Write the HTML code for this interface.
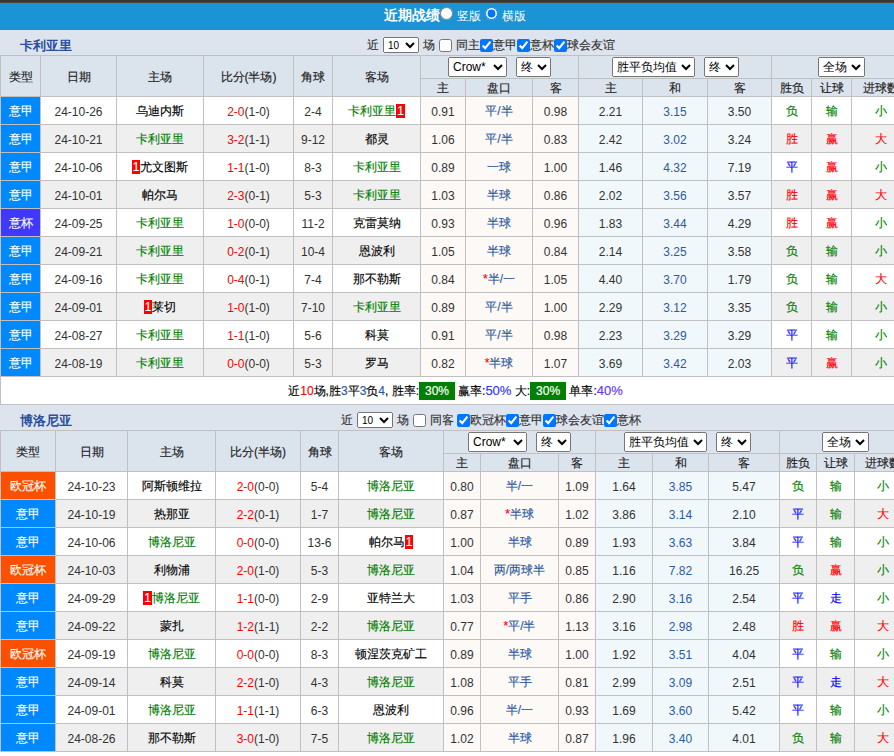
<!DOCTYPE html>
<html><head><meta charset="utf-8"><style>
html,body{margin:0;padding:0;background:#fff;}
body{width:910px;font-family:"Liberation Sans",sans-serif;font-size:12px;color:#333;overflow:hidden;}
.top{height:2px;background:#373737;border-bottom:1px solid #4e4441;}
.bar{height:27px;background:#1a94d4;color:#fff;text-align:center;font-size:12px;line-height:27px;}
.bar b{font-size:14px;}
.bar .rd{margin:0 2px 0 0;width:12px;height:12px;vertical-align:-2px;}
.sec{position:relative;background:#dde4ed;}
.tt{position:absolute;left:20px;top:7px;font-size:13px;font-weight:bold;color:#2b4f9e;}
.flt{position:absolute;top:6px;font-size:12px;color:#333;white-space:nowrap;}
.flt input{margin:0;width:13px;height:13px;vertical-align:-2px;}
.flt .cb0{margin:0 3px 0 4px;}
.ns{width:36px;height:15px;font-size:12px;padding:0;}
table.t{border-collapse:collapse;table-layout:fixed;width:910px;}
.t td,.t th{border:1px solid #c0c0c0;padding:0;text-align:center;white-space:nowrap;overflow:hidden;font-weight:normal;}
.t th{background:#dbe3ec;color:#222;}
.t tr.h1 th{height:22px;}
.t tr.h2 th{height:16px;padding-top:1px;line-height:16px;}
.t td{height:25px;padding-top:2px;background:#fff;color:#000;}
.t tr.alt td{background:#efefef;}
.t td.ty{color:#fff;}
.t td.o1{background:#fdf9f6 !important;}
.t td.o2{background:#f0f8fb !important;}
.dk{color:#333 !important;}
.bl{color:#2c5aa0 !important;}
.g{color:#008000;}
.r{color:#f00;}
.bd{font-style:normal;background:#f00;color:#fff;padding:0 1px;}
.t select{height:20px;font-size:12px;vertical-align:middle;}
.sum td{height:25px;background:#fff;}
.gb{background:#008000;color:#fff;padding:2px 6px 2px 6px;}
.bb{color:#33f;font-size:13px;}
.pb{color:#63f;font-size:13px;}
.b2{color:#2c5aa0;}
.ab{position:absolute;white-space:nowrap;}
.bar{position:relative;}
.bar .ab{line-height:normal;}
.bar .rd{margin:0;width:13px;height:13px;}
.sec input{margin:0;width:13px;height:13px;}
.sec .ab{font-size:12px;color:#333;}
.sec select.ns{width:36px;height:16px;font-size:10px;color:#000;}
.t th[rowspan]{padding-top:3px;}
.t td,.t th,.sec .ab,.sum td{-webkit-text-stroke:0.15px currentColor;}
.t td.dk,.t td.nm{-webkit-text-stroke:0;}
select{-webkit-text-stroke:0 !important;}
select,input{font-family:"Liberation Sans",sans-serif;}

</style></head><body>
<div class="top"></div>
<div class="bar"><b class="ab" style="left:384px;top:4px">近期战绩</b><input type="radio" class="rd ab" style="left:440px;top:4px"><span class="ab" style="left:457px;top:5px">竖版</span><input type="radio" class="rd ab" style="left:485px;top:4px" checked><span class="ab" style="left:502px;top:5px">横版</span></div>
<div class="sec" style="height:25px"><span class="tt">卡利亚里</span><span class="ab" style="left:367px;top:7px">近</span><select class="ns ab" style="left:383px;top:7px"><option>10</option></select><span class="ab" style="left:423px;top:7px">场</span><input type="checkbox" class="ab" style="left:439px;top:9px"><span class="ab" style="left:456px;top:7px">同主</span><input type="checkbox" class="ab" style="left:480px;top:9px" checked><span class="ab" style="left:493px;top:7px">意甲</span><input type="checkbox" class="ab" style="left:517px;top:9px" checked><span class="ab" style="left:530px;top:7px">意杯</span><input type="checkbox" class="ab" style="left:554px;top:9px" checked><span class="ab" style="left:567px;top:7px">球会友谊</span></div>
<table class="t t1"><colgroup><col style="width:40px"><col style="width:76px"><col style="width:87px"><col style="width:90px"><col style="width:39px"><col style="width:88px"><col style="width:45px"><col style="width:67px"><col style="width:46px"><col style="width:64px"><col style="width:65px"><col style="width:64px"><col style="width:40px"><col style="width:40px"><col style="width:59px"></colgroup>
<tr class="h1"><th rowspan="2">类型</th><th rowspan="2">日期</th><th rowspan="2">主场</th><th rowspan="2">比分(半场)</th><th rowspan="2">角球</th><th rowspan="2">客场</th><th colspan="3"><select style="width:59px;margin:0 9px 0 0"><option>Crow*</option></select><select style="width:35px;margin:0 0px 0 0"><option>终</option></select></th><th colspan="3"><select style="width:83px;margin:0 9px 0 0"><option>胜平负均值</option></select><select style="width:35px;margin:0 0px 0 0"><option>终</option></select></th><th colspan="3"><select style="width:47px;margin:0 0px 0 0"><option>全场</option></select></th></tr><tr class="h2"><th>主</th><th>盘口</th><th>客</th><th>主</th><th>和</th><th>客</th><th>胜负</th><th>让球</th><th>进球数</th></tr>
<tr class=""><td class="ty" style="background:#0088ff">意甲</td><td class="dk">24-10-26</td><td>乌迪内斯</td><td class="dk"><span class="r">2-0</span>(1-0)</td><td class="dk">2-4</td><td><span class="g">卡利亚里</span><i class="bd">1</i></td><td class="o1 dk">0.91</td><td class="o1 bl">平/半</td><td class="o1 dk">0.98</td><td class="o2 dk">2.21</td><td class="o2 bl nm">3.15</td><td class="o2 dk">3.50</td><td style="color:#008000">负</td><td style="color:#008000">输</td><td style="color:#008000">小</td></tr>
<tr class="alt"><td class="ty" style="background:#0088ff">意甲</td><td class="dk">24-10-21</td><td><span class="g">卡利亚里</span></td><td class="dk"><span class="r">3-2</span>(1-1)</td><td class="dk">9-12</td><td>都灵</td><td class="o1 dk">1.06</td><td class="o1 bl">平/半</td><td class="o1 dk">0.83</td><td class="o2 dk">2.42</td><td class="o2 bl nm">3.02</td><td class="o2 dk">3.24</td><td style="color:#f00">胜</td><td style="color:#f00">赢</td><td style="color:#f00">大</td></tr>
<tr class=""><td class="ty" style="background:#0088ff">意甲</td><td class="dk">24-10-06</td><td><i class="bd">1</i>尤文图斯</td><td class="dk"><span class="r">1-1</span>(1-0)</td><td class="dk">8-3</td><td><span class="g">卡利亚里</span></td><td class="o1 dk">0.89</td><td class="o1 bl">一球</td><td class="o1 dk">1.00</td><td class="o2 dk">1.46</td><td class="o2 bl nm">4.32</td><td class="o2 dk">7.19</td><td style="color:#00f">平</td><td style="color:#f00">赢</td><td style="color:#008000">小</td></tr>
<tr class="alt"><td class="ty" style="background:#0088ff">意甲</td><td class="dk">24-10-01</td><td>帕尔马</td><td class="dk"><span class="r">2-3</span>(0-1)</td><td class="dk">5-3</td><td><span class="g">卡利亚里</span></td><td class="o1 dk">1.03</td><td class="o1 bl">半球</td><td class="o1 dk">0.86</td><td class="o2 dk">2.02</td><td class="o2 bl nm">3.56</td><td class="o2 dk">3.57</td><td style="color:#f00">胜</td><td style="color:#f00">赢</td><td style="color:#f00">大</td></tr>
<tr class=""><td class="ty" style="background:#4038ff">意杯</td><td class="dk">24-09-25</td><td><span class="g">卡利亚里</span></td><td class="dk"><span class="r">1-0</span>(0-0)</td><td class="dk">11-2</td><td>克雷莫纳</td><td class="o1 dk">0.93</td><td class="o1 bl">半球</td><td class="o1 dk">0.96</td><td class="o2 dk">1.83</td><td class="o2 bl nm">3.44</td><td class="o2 dk">4.29</td><td style="color:#f00">胜</td><td style="color:#f00">赢</td><td style="color:#008000">小</td></tr>
<tr class="alt"><td class="ty" style="background:#0088ff">意甲</td><td class="dk">24-09-21</td><td><span class="g">卡利亚里</span></td><td class="dk"><span class="r">0-2</span>(0-1)</td><td class="dk">10-4</td><td>恩波利</td><td class="o1 dk">1.05</td><td class="o1 bl">半球</td><td class="o1 dk">0.84</td><td class="o2 dk">2.14</td><td class="o2 bl nm">3.25</td><td class="o2 dk">3.58</td><td style="color:#008000">负</td><td style="color:#008000">输</td><td style="color:#008000">小</td></tr>
<tr class=""><td class="ty" style="background:#0088ff">意甲</td><td class="dk">24-09-16</td><td><span class="g">卡利亚里</span></td><td class="dk"><span class="r">0-4</span>(0-1)</td><td class="dk">7-4</td><td>那不勒斯</td><td class="o1 dk">0.84</td><td class="o1 bl"><span class="r">*</span>半/一</td><td class="o1 dk">1.05</td><td class="o2 dk">4.40</td><td class="o2 bl nm">3.70</td><td class="o2 dk">1.79</td><td style="color:#008000">负</td><td style="color:#008000">输</td><td style="color:#f00">大</td></tr>
<tr class="alt"><td class="ty" style="background:#0088ff">意甲</td><td class="dk">24-09-01</td><td><i class="bd">1</i>莱切</td><td class="dk"><span class="r">1-0</span>(1-0)</td><td class="dk">7-10</td><td><span class="g">卡利亚里</span></td><td class="o1 dk">0.89</td><td class="o1 bl">平/半</td><td class="o1 dk">1.00</td><td class="o2 dk">2.29</td><td class="o2 bl nm">3.12</td><td class="o2 dk">3.35</td><td style="color:#008000">负</td><td style="color:#008000">输</td><td style="color:#008000">小</td></tr>
<tr class=""><td class="ty" style="background:#0088ff">意甲</td><td class="dk">24-08-27</td><td><span class="g">卡利亚里</span></td><td class="dk"><span class="r">1-1</span>(1-0)</td><td class="dk">5-6</td><td>科莫</td><td class="o1 dk">0.91</td><td class="o1 bl">平/半</td><td class="o1 dk">0.98</td><td class="o2 dk">2.23</td><td class="o2 bl nm">3.29</td><td class="o2 dk">3.29</td><td style="color:#00f">平</td><td style="color:#008000">输</td><td style="color:#008000">小</td></tr>
<tr class="alt"><td class="ty" style="background:#0088ff">意甲</td><td class="dk">24-08-19</td><td><span class="g">卡利亚里</span></td><td class="dk"><span class="r">0-0</span>(0-0)</td><td class="dk">5-3</td><td>罗马</td><td class="o1 dk">0.82</td><td class="o1 bl"><span class="r">*</span>半球</td><td class="o1 dk">1.07</td><td class="o2 dk">3.69</td><td class="o2 bl nm">3.42</td><td class="o2 dk">2.03</td><td style="color:#00f">平</td><td style="color:#f00">赢</td><td style="color:#008000">小</td></tr>
<tr class="sum"><td colspan="15">近<span class="r">10</span>场,胜<span class="b2">3</span>平<span class="b2">3</span>负<span class="b2">4</span>, 胜率:<span class="gb">30%</span><span style="margin-left:3px">赢</span>率:<span class="bb">50%</span> 大:<span class="gb">30%</span> 单率:<span class="pb">40%</span></td></tr>
</table>
<div class="sec" style="height:25px"><span class="tt">博洛尼亚</span><span class="ab" style="left:341px;top:7px">近</span><select class="ns ab" style="left:357px;top:7px"><option>10</option></select><span class="ab" style="left:397px;top:7px">场</span><input type="checkbox" class="ab" style="left:413px;top:9px"><span class="ab" style="left:430px;top:7px">同客</span><input type="checkbox" class="ab" style="left:457px;top:9px" checked><span class="ab" style="left:470px;top:7px">欧冠杯</span><input type="checkbox" class="ab" style="left:506px;top:9px" checked><span class="ab" style="left:519px;top:7px">意甲</span><input type="checkbox" class="ab" style="left:543px;top:9px" checked><span class="ab" style="left:556px;top:7px">球会友谊</span><input type="checkbox" class="ab" style="left:604px;top:9px" checked><span class="ab" style="left:617px;top:7px">意杯</span></div>
<table class="t t2"><colgroup><col style="width:55px"><col style="width:72px"><col style="width:88px"><col style="width:85px"><col style="width:38px"><col style="width:105px"><col style="width:37px"><col style="width:78px"><col style="width:37px"><col style="width:57px"><col style="width:56px"><col style="width:71px"><col style="width:37px"><col style="width:38px"><col style="width:56px"></colgroup>
<tr class="h1"><th rowspan="2">类型</th><th rowspan="2">日期</th><th rowspan="2">主场</th><th rowspan="2">比分(半场)</th><th rowspan="2">角球</th><th rowspan="2">客场</th><th colspan="3"><select style="width:59px;margin:0 9px 0 0"><option>Crow*</option></select><select style="width:35px;margin:0 0px 0 0"><option>终</option></select></th><th colspan="3"><select style="width:83px;margin:0 9px 0 0"><option>胜平负均值</option></select><select style="width:35px;margin:0 0px 0 0"><option>终</option></select></th><th colspan="3"><select style="width:47px;margin:0 0px 0 0"><option>全场</option></select></th></tr><tr class="h2"><th>主</th><th>盘口</th><th>客</th><th>主</th><th>和</th><th>客</th><th>胜负</th><th>让球</th><th>进球数</th></tr>
<tr class=""><td class="ty" style="background:#fa5000">欧冠杯</td><td class="dk">24-10-23</td><td>阿斯顿维拉</td><td class="dk"><span class="r">2-0</span>(0-0)</td><td class="dk">5-4</td><td><span class="g">博洛尼亚</span></td><td class="o1 dk">0.80</td><td class="o1 bl">半/一</td><td class="o1 dk">1.09</td><td class="o2 dk">1.64</td><td class="o2 bl nm">3.85</td><td class="o2 dk">5.47</td><td style="color:#008000">负</td><td style="color:#008000">输</td><td style="color:#008000">小</td></tr>
<tr class="alt"><td class="ty" style="background:#0088ff">意甲</td><td class="dk">24-10-19</td><td>热那亚</td><td class="dk"><span class="r">2-2</span>(0-1)</td><td class="dk">1-7</td><td><span class="g">博洛尼亚</span></td><td class="o1 dk">0.87</td><td class="o1 bl"><span class="r">*</span>半球</td><td class="o1 dk">1.02</td><td class="o2 dk">3.86</td><td class="o2 bl nm">3.14</td><td class="o2 dk">2.10</td><td style="color:#00f">平</td><td style="color:#008000">输</td><td style="color:#f00">大</td></tr>
<tr class=""><td class="ty" style="background:#0088ff">意甲</td><td class="dk">24-10-06</td><td><span class="g">博洛尼亚</span></td><td class="dk"><span class="r">0-0</span>(0-0)</td><td class="dk">13-6</td><td>帕尔马<i class="bd">1</i></td><td class="o1 dk">1.00</td><td class="o1 bl">半球</td><td class="o1 dk">0.89</td><td class="o2 dk">1.93</td><td class="o2 bl nm">3.63</td><td class="o2 dk">3.84</td><td style="color:#00f">平</td><td style="color:#008000">输</td><td style="color:#008000">小</td></tr>
<tr class="alt"><td class="ty" style="background:#fa5000">欧冠杯</td><td class="dk">24-10-03</td><td>利物浦</td><td class="dk"><span class="r">2-0</span>(1-0)</td><td class="dk">5-3</td><td><span class="g">博洛尼亚</span></td><td class="o1 dk">1.04</td><td class="o1 bl">两/两球半</td><td class="o1 dk">0.85</td><td class="o2 dk">1.16</td><td class="o2 bl nm">7.82</td><td class="o2 dk">16.25</td><td style="color:#008000">负</td><td style="color:#f00">赢</td><td style="color:#008000">小</td></tr>
<tr class=""><td class="ty" style="background:#0088ff">意甲</td><td class="dk">24-09-29</td><td><i class="bd">1</i><span class="g">博洛尼亚</span></td><td class="dk"><span class="r">1-1</span>(0-0)</td><td class="dk">2-9</td><td>亚特兰大</td><td class="o1 dk">1.03</td><td class="o1 bl">平手</td><td class="o1 dk">0.86</td><td class="o2 dk">2.90</td><td class="o2 bl nm">3.16</td><td class="o2 dk">2.54</td><td style="color:#00f">平</td><td style="color:#00f">走</td><td style="color:#008000">小</td></tr>
<tr class="alt"><td class="ty" style="background:#0088ff">意甲</td><td class="dk">24-09-22</td><td>蒙扎</td><td class="dk"><span class="r">1-2</span>(1-1)</td><td class="dk">2-2</td><td><span class="g">博洛尼亚</span></td><td class="o1 dk">0.77</td><td class="o1 bl"><span class="r">*</span>平/半</td><td class="o1 dk">1.13</td><td class="o2 dk">3.16</td><td class="o2 bl nm">2.98</td><td class="o2 dk">2.48</td><td style="color:#f00">胜</td><td style="color:#f00">赢</td><td style="color:#f00">大</td></tr>
<tr class=""><td class="ty" style="background:#fa5000">欧冠杯</td><td class="dk">24-09-19</td><td><span class="g">博洛尼亚</span></td><td class="dk"><span class="r">0-0</span>(0-0)</td><td class="dk">8-3</td><td>顿涅茨克矿工</td><td class="o1 dk">0.89</td><td class="o1 bl">半球</td><td class="o1 dk">1.00</td><td class="o2 dk">1.92</td><td class="o2 bl nm">3.51</td><td class="o2 dk">4.04</td><td style="color:#00f">平</td><td style="color:#008000">输</td><td style="color:#008000">小</td></tr>
<tr class="alt"><td class="ty" style="background:#0088ff">意甲</td><td class="dk">24-09-14</td><td>科莫</td><td class="dk"><span class="r">2-2</span>(1-0)</td><td class="dk">4-3</td><td><span class="g">博洛尼亚</span></td><td class="o1 dk">1.08</td><td class="o1 bl">平手</td><td class="o1 dk">0.81</td><td class="o2 dk">2.99</td><td class="o2 bl nm">3.09</td><td class="o2 dk">2.51</td><td style="color:#00f">平</td><td style="color:#00f">走</td><td style="color:#f00">大</td></tr>
<tr class=""><td class="ty" style="background:#0088ff">意甲</td><td class="dk">24-09-01</td><td><span class="g">博洛尼亚</span></td><td class="dk"><span class="r">1-1</span>(1-1)</td><td class="dk">6-3</td><td>恩波利</td><td class="o1 dk">0.96</td><td class="o1 bl">半/一</td><td class="o1 dk">0.93</td><td class="o2 dk">1.69</td><td class="o2 bl nm">3.60</td><td class="o2 dk">5.42</td><td style="color:#00f">平</td><td style="color:#008000">输</td><td style="color:#008000">小</td></tr>
<tr class="alt"><td class="ty" style="background:#0088ff">意甲</td><td class="dk">24-08-26</td><td>那不勒斯</td><td class="dk"><span class="r">3-0</span>(1-0)</td><td class="dk">7-5</td><td><span class="g">博洛尼亚</span></td><td class="o1 dk">1.02</td><td class="o1 bl">半球</td><td class="o1 dk">0.87</td><td class="o2 dk">1.96</td><td class="o2 bl nm">3.40</td><td class="o2 dk">4.01</td><td style="color:#008000">负</td><td style="color:#008000">输</td><td style="color:#f00">大</td></tr>
</table>
</body></html>
